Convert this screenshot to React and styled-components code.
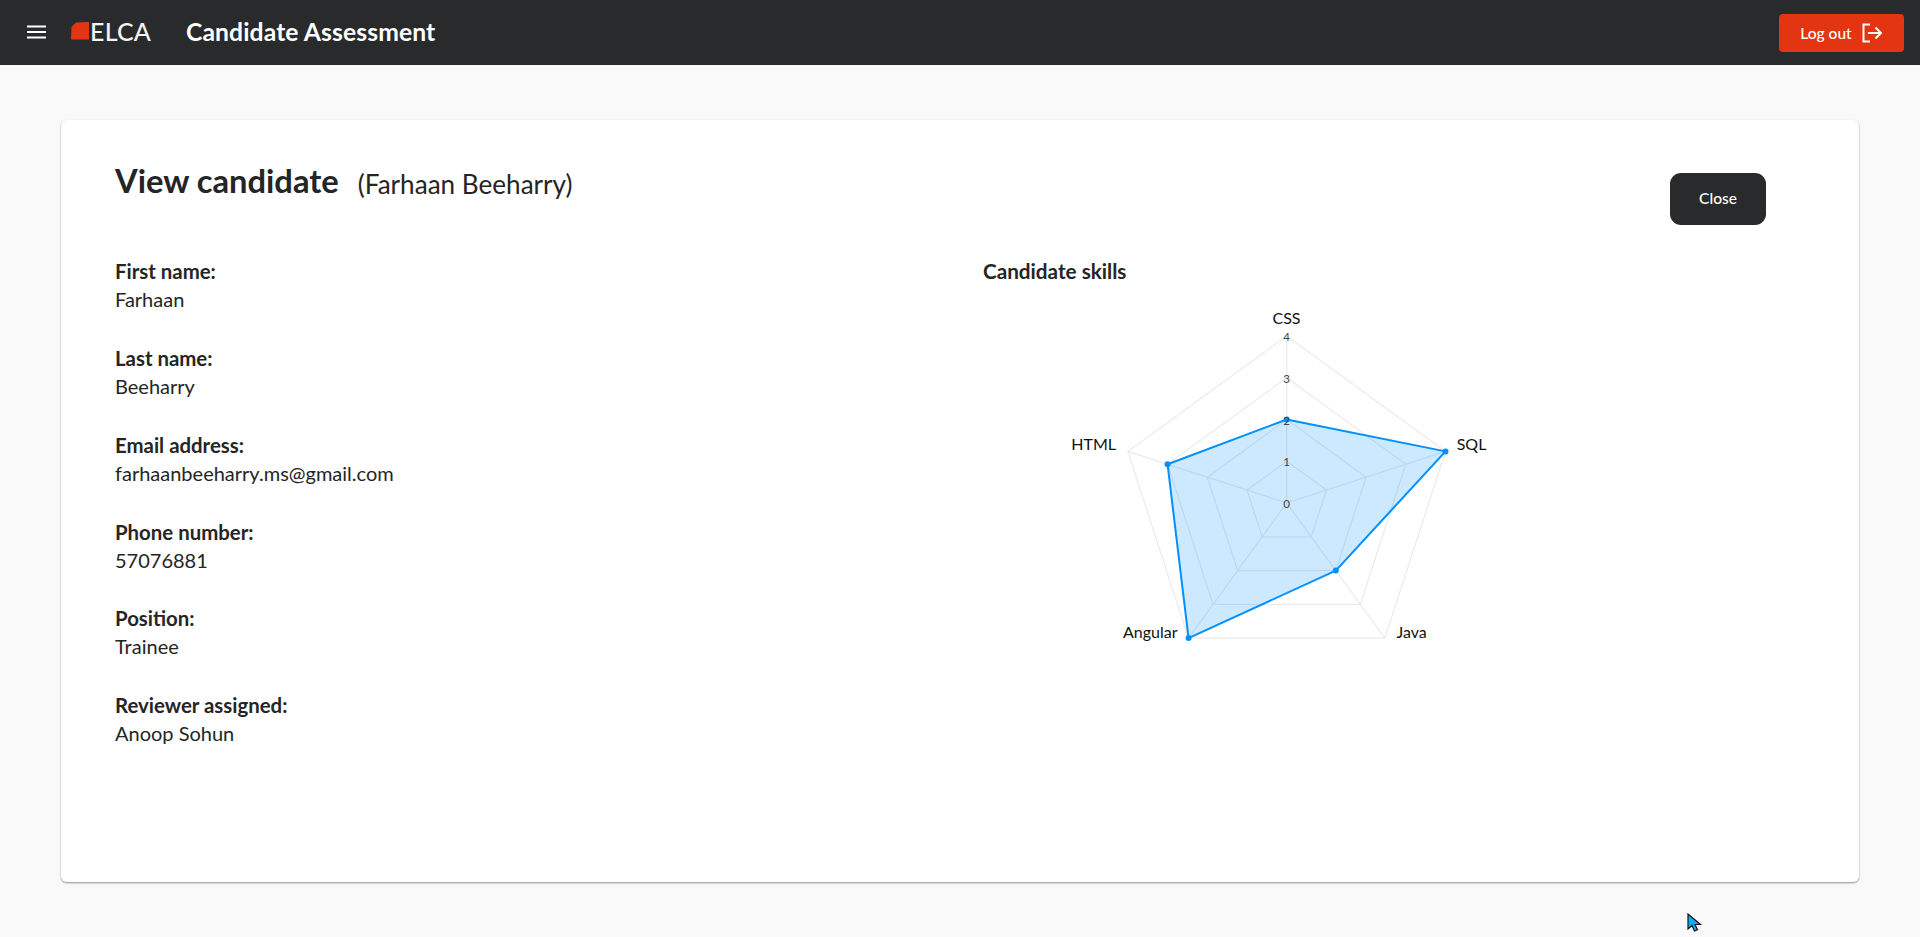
import React from 'react';
import styled, { createGlobalStyle } from 'styled-components';

const colors = {
  dark: '#292a2c',
  red: '#e33512',
  page: '#f9f9f9',
  text: '#252525',
  blue: '#0090ff',
};

const GlobalStyle = createGlobalStyle`
  html, body {
    margin: 0;
    padding: 0;
    background: ${colors.page};
    font-family: Lato, "Open Sans", sans-serif;
    color: ${colors.text};
    overflow: hidden;
  }
`;

const Page = styled.div`
  position: relative;
  height: 937px;
`;

const TopBar = styled.header`
  display: flex;
  align-items: center;
  height: 65px;
  padding: 0 16px 0 27px;
  background: ${colors.dark};
  color: #fff;
`;

const MenuButton = styled.svg`
  width: 19px;
  height: 14px;
  margin: -2px 25px 0 0;
`;

const Logo = styled.div`
  display: flex;
  align-items: center;
  gap: 1px;
  width: 115px;
  margin-top: -3px;
  font-size: 25px;
  font-weight: 500;
  letter-spacing: 0.2px;
  color: #f4f4f4;
`;

const AppTitle = styled.h1`
  flex: 1;
  margin: -3px 0 0;
  font-size: 24.7px;
  font-weight: 700;
  letter-spacing: 0.1px;
`;

const LogoutButton = styled.button`
  display: flex;
  align-items: center;
  justify-content: center;
  gap: 10px;
  width: 125px;
  height: 38px;
  padding: 0;
  border: 0;
  border-radius: 4px;
  background: ${colors.red};
  color: #fff;
  font: 500 15.5px Lato, sans-serif;
`;

const Main = styled.main`
  padding: 55px 61px 0 61px;
`;

const Card = styled.section`
  box-sizing: border-box;
  height: 762px;
  padding: 42px 93px 0 54px;
  background: #fff;
  border-radius: 6px;
  box-shadow: 0 1px 2px rgba(0, 0, 0, 0.4), 0 0 3px rgba(0, 0, 0, 0.03);
`;

const CardHeader = styled.div`
  display: flex;
  justify-content: space-between;
  align-items: flex-start;
  height: 65px;
`;

const Heading = styled.div`
  display: flex;
  align-items: flex-start;
  gap: 19px;
  margin-top: -3px;
`;

const Title = styled.h2`
  margin: 0;
  font-size: 32.7px;
  font-weight: 700;
  line-height: 44px;
`;

const Subtitle = styled.span`
  margin-top: 3px;
  font-size: 26.1px;
  font-weight: 400;
  line-height: 44px;
`;

const CloseButton = styled.button`
  width: 96px;
  height: 52px;
  margin-top: 11px;
  padding: 0 0 2px;
  border: 0;
  border-radius: 11px;
  background: ${colors.dark};
  color: #fff;
  font: 500 15.5px Lato, sans-serif;
`;

const Columns = styled.div`
  display: grid;
  grid-template-columns: 868px 1fr;
  margin-top: 31px;
`;

const Fields = styled.dl`
  display: flex;
  flex-direction: column;
  gap: 31.85px;
  margin: 0;
`;

const Field = styled.div`
  height: 55px;
`;

const Label = styled.dt`
  font-size: 20.4px;
  font-weight: 700;
  line-height: 27px;
`;

const Value = styled.dd`
  margin: 0;
  font-size: 20px;
  line-height: 29px;
`;

const ChartTitle = styled.h3`
  margin: 0;
  font-size: 20.7px;
  font-weight: 700;
  line-height: 27px;
`;

const Chart = styled.svg`
  display: block;
  width: 460px;
  height: 380px;
  margin: 5px 0 0 57px;

  text {
    font-family: Lato, sans-serif;
  }
`;

const Cursor = styled.svg`
  position: absolute;
  left: 1687px;
  top: 913px;
  width: 16px;
  height: 20px;
`;

const fields = [
  ['First name:', 'Farhaan'],
  ['Last name:', 'Beeharry'],
  ['Email address:', 'farhaanbeeharry.ms@gmail.com'],
  ['Phone number:', '57076881'],
  ['Position:', 'Trainee'],
  ['Reviewer assigned:', 'Anoop Sohun'],
];

// radar chart, coordinates relative to the svg box
const cx = 246.7;
const cy = 213;
const radius = 167;
const maxValue = 4;
const skills = [
  { name: 'CSS', value: 2, x: 246.5, y: 34, anchor: 'middle' },
  { name: 'SQL', value: 4, x: 416.7, y: 160, anchor: 'start' },
  { name: 'Java', value: 2, x: 356.5, y: 348, anchor: 'start' },
  { name: 'Angular', value: 4, x: 137.5, y: 348, anchor: 'end' },
  { name: 'HTML', value: 3, x: 76, y: 160, anchor: 'end' },
];

const point = (index, value) => {
  const angle = (index * 2 * Math.PI) / skills.length;
  const r = (radius * value) / maxValue;
  return [cx + r * Math.sin(angle), cy - r * Math.cos(angle)];
};

const toPoints = (getValue) =>
  skills.map((skill, i) => point(i, getValue(skill)).join(',')).join(' ');

const RadarChart = () => (
  <Chart viewBox="0 0 460 380">
    {[1, 2, 3, 4].map((level) => (
      <polygon key={level} points={toPoints(() => level)} fill="none" stroke="#ebebeb" strokeWidth="1.2" />
    ))}
    {skills.map((skill, i) => {
      const [x, y] = point(i, maxValue);
      return <line key={skill.name} x1={cx} y1={cy} x2={x} y2={y} stroke="#ebebeb" strokeWidth="1.2" />;
    })}
    <polygon
      points={toPoints((skill) => skill.value)}
      fill={colors.blue}
      fillOpacity="0.2"
      stroke={colors.blue}
      strokeWidth="2"
      strokeLinejoin="round"
    />
    {skills.map((skill, i) => {
      const [x, y] = point(i, skill.value);
      return <circle key={skill.name} cx={x} cy={y} r="3" fill={colors.blue} />;
    })}
    {[0, 1, 2, 3, 4].map((tick) => (
      <text key={tick} x={cx} y={cy - (radius * tick) / maxValue + 5} fontSize="11.5" fill="#444" textAnchor="middle">
        {tick}
      </text>
    ))}
    {skills.map((skill) => (
      <text key={skill.name} x={skill.x} y={skill.y} fontSize="16" fill="#111" textAnchor={skill.anchor}>
        {skill.name}
      </text>
    ))}
  </Chart>
);

export default function App() {
  return (
    <Page>
      <GlobalStyle />
      <TopBar>
        <MenuButton viewBox="0 0 19 14">
          <path d="M0 1.5h19M0 7h19M0 12.5h19" stroke="#fff" strokeWidth="2" />
        </MenuButton>
        <Logo>
          <svg width="18" height="18" viewBox="0 0 18 18">
            <path d="M5 0.5 L18 0 V17.5 H0 L0.5 5 Z" fill={colors.red} />
          </svg>
          ELCA
        </Logo>
        <AppTitle>Candidate Assessment</AppTitle>
        <LogoutButton>
          Log out
          <svg width="21" height="20" viewBox="0 0 21 20" fill="none" stroke="#fff" strokeWidth="2">
            <path d="M8 1.5H1.5v17H8M6 10h13M13.5 4.5 19 10l-5.500 5.500" />
          </svg>
        </LogoutButton>
      </TopBar>
      <Main>
        <Card>
          <CardHeader>
            <Heading>
              <Title>View candidate</Title>
              <Subtitle>(Farhaan Beeharry)</Subtitle>
            </Heading>
            <CloseButton>Close</CloseButton>
          </CardHeader>
          <Columns>
            <Fields>
              {fields.map(([label, value]) => (
                <Field key={label}>
                  <Label>{label}</Label>
                  <Value>{value}</Value>
                </Field>
              ))}
            </Fields>
            <div>
              <ChartTitle>Candidate skills</ChartTitle>
              <RadarChart />
            </div>
          </Columns>
        </Card>
      </Main>
      <Cursor viewBox="0 0 16 20">
        <path d="M1 1v15l4-3.500 2.500 5.500 3-1.300-2.500-5.200H13.500Z" fill="#10aef0" stroke="#111" strokeWidth="1.200" />
      </Cursor>
    </Page>
  );
}
